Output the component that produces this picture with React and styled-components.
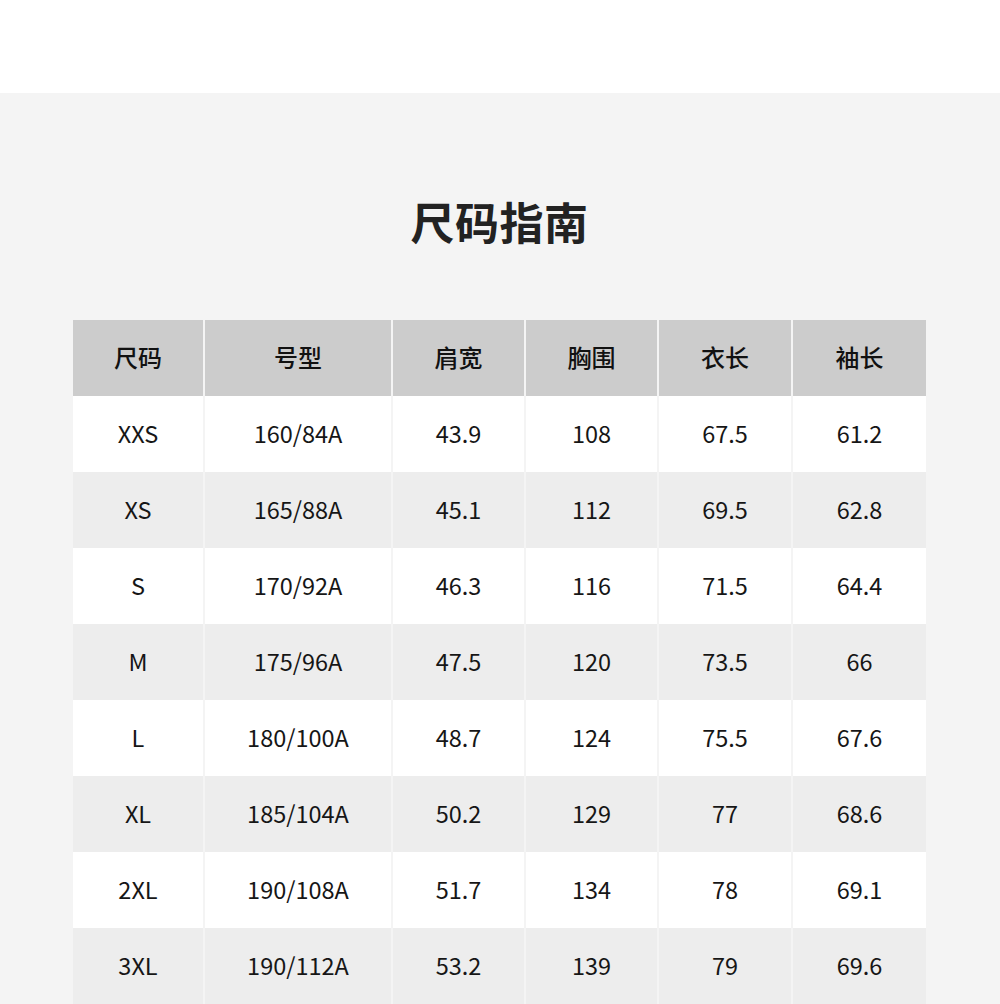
import React from "react";
import styled, { createGlobalStyle } from "styled-components";

const Global = createGlobalStyle`
  html, body { margin: 0; padding: 0; background: #f4f4f4; }
  body { font-family: "Noto Sans CJK SC", "Noto Sans", sans-serif; }
`;

const TopBand = styled.div`
  height: 93px;
  background: #ffffff;
`;

const Section = styled.section`
  background: #f4f4f4;
  padding: 98px 74px 0 73px;
  display: flex;
  flex-direction: column;
  align-items: stretch;
`;

const Title = styled.h1`
  margin: 0;
  height: 60px;
  line-height: 60px;
  text-align: center;
  font-size: 44px;
  font-weight: 700;
  color: #222;
  letter-spacing: 0.5px;
`;

const Table = styled.div`
  margin-top: 69px;
  display: flex;
  flex-direction: column;
`;

const Row = styled.div`
  display: grid;
  grid-template-columns: 130px 186px 131px 131px 132px 133px;
  column-gap: 2px;
  height: 76px;
  background: #f4f4f4;
`;

const Cell = styled.div`
  display: flex;
  align-items: center;
  justify-content: center;
  padding-bottom: 3px;
  background: ${(p) => (p.$head ? "#cccccc" : p.$alt ? "#ededed" : "#ffffff")};
  color: ${(p) => (p.$head ? "#111" : "#161616")};
  font-size: ${(p) => (p.$head ? "24px" : "23.5px")};
  font-weight: ${(p) => (p.$head ? 500 : 400)};
`;

const head = ["尺码", "号型", "肩宽", "胸围", "衣长", "袖长"];
const rows = [
  ["XXS", "160/84A", "43.9", "108", "67.5", "61.2"],
  ["XS", "165/88A", "45.1", "112", "69.5", "62.8"],
  ["S", "170/92A", "46.3", "116", "71.5", "64.4"],
  ["M", "175/96A", "47.5", "120", "73.5", "66"],
  ["L", "180/100A", "48.7", "124", "75.5", "67.6"],
  ["XL", "185/104A", "50.2", "129", "77", "68.6"],
  ["2XL", "190/108A", "51.7", "134", "78", "69.1"],
  ["3XL", "190/112A", "53.2", "139", "79", "69.6"],
];

export default function App() {
  return (
    <>
      <Global />
      <TopBand />
      <Section>
        <Title>尺码指南</Title>
        <Table>
          <Row>
            {head.map((h) => (
              <Cell key={h} $head>
                {h}
              </Cell>
            ))}
          </Row>
          {rows.map((r, i) => (
            <Row key={r[0]}>
              {r.map((v, j) => (
                <Cell key={j} $alt={i % 2 === 1}>
                  {v}
                </Cell>
              ))}
            </Row>
          ))}
        </Table>
      </Section>
    </>
  );
}
